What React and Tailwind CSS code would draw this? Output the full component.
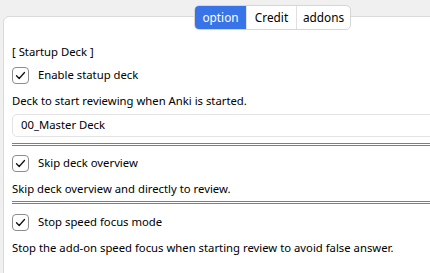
import React from "react";

function Check() {
  return (
    <div className="w-[17px] h-[17px] rounded-[4px] border border-[#8d8d8d] bg-white flex items-center justify-center shrink-0">
      <svg width="13" height="13" viewBox="0 0 13 13">
        <polyline points="2.5,6.8 5.2,9.5 10.5,3.5" fill="none" stroke="#111" strokeWidth="1.3" strokeLinecap="round" strokeLinejoin="round" />
      </svg>
    </div>
  );
}

function CheckRow({ label, className }) {
  return (
    <div className={"flex items-center h-[17px] " + className}>
      <Check />
      <span className="ml-[9px]">{label}</span>
    </div>
  );
}

export default function App() {
  return (
    <div
      className="relative w-[430px] h-[273px] bg-[#f0f0f0] overflow-hidden text-[11.3px] text-black"
      style={{ fontFamily: '"Noto Sans", "Open Sans", sans-serif' }}
    >
      <div className="mt-[16px] ml-[3px] w-[480px] h-[300px] bg-white border border-[#dadada] rounded-tl-[6px] pl-[8px] pt-[26px]">
        <div className="h-[18px] flex items-center">[ Startup Deck ]</div>
        <CheckRow label="Enable statup deck" className="mt-[6px]" />
        <div className="h-[18px] flex items-center mt-[8px]">Deck to start reviewing when Anki is started.</div>
        <div className="h-[23px] mt-[4px] border border-[#e3e3e3] rounded-[5px] flex items-center pl-[8px]">00_Master Deck</div>
        <div className="h-[3px] mt-[6px] border-t-[3px] border-double border-[#7f7f7f]" />
        <CheckRow label="Skip deck overview" className="mt-[9px]" />
        <div className="h-[18px] flex items-center mt-[8px]">Skip deck overview and directly to review.</div>
        <div className="h-[3px] mt-[3px] border-t-[3px] border-double border-[#7f7f7f]" />
        <CheckRow label="Stop speed focus mode" className="mt-[10px]" />
        <div className="h-[18px] flex items-center mt-[8px]">Stop the add-on speed focus when starting review to avoid false answer.</div>
      </div>
      <div className="absolute top-[5px] left-[194px] flex h-[25px] rounded-[5px] border border-[#d6d6d6] bg-white overflow-hidden text-[11.8px]">
        <div className="w-[51px] flex items-center justify-center bg-[#3874e8] text-white">option</div>
        <div className="w-[50px] flex items-center justify-center border-l border-[#e0e0e0]">Credit</div>
        <div className="w-[54px] flex items-center justify-center border-l border-[#e0e0e0]">addons</div>
      </div>
    </div>
  );
}
